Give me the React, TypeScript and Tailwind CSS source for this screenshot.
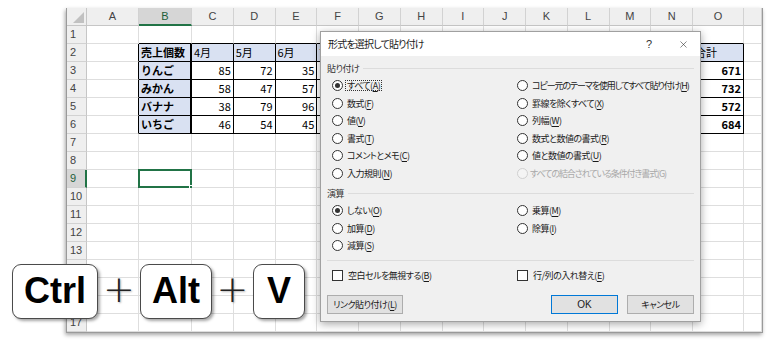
import { X } from 'lucide-react';

const COLS = ['A', 'B', 'C', 'D', 'E', 'F', 'G', 'H', 'I', 'J', 'K', 'L', 'M', 'N', 'O', ''];

const TABLE: (string | number)[][] = [
  ['売上個数', '4月', '5月', '6月', '7月', '8月', '9月', '10月', '11月', '12月', '1月', '2月', '3月', '合計'],
  ['りんご', 85, 72, 35, 61, 48, 55, 57, 52, 44, 50, 59, 53, 671],
  ['みかん', 58, 47, 57, 66, 62, 70, 64, 55, 68, 61, 60, 64, 732],
  ['バナナ', 38, 79, 96, 42, 35, 50, 41, 38, 44, 39, 36, 34, 572],
  ['いちご', 46, 54, 45, 60, 51, 58, 63, 59, 62, 57, 66, 63, 684],
];

const cellFont = "font-['Noto_Sans_CJK_JP',sans-serif]";
const uiFont = "font-['Noto_Sans_CJK_JP',sans-serif] [font-feature-settings:'palt']";

function Cell({ r, c }: { r: number; c: number }) {
  const inTable = r >= 2 && r <= 6 && c >= 1 && c <= 14;
  const rightBlack = inTable || (c === 0 && r >= 2 && r <= 6);
  const bottomBlack = inTable || (r === 1 && c >= 1 && c <= 14);
  const value = inTable ? TABLE[r - 2][c - 1] : '';
  const isNum = typeof value === 'number';
  const bold = inTable && (c === 1 || (c === 14 && r >= 3));
  const blue = inTable && (r === 2 || c === 1);
  const selected = r === 9 && c === 1;

  return (
    <div
      className={`relative h-[18px] whitespace-nowrap px-[2px] text-[11px] leading-[17px] text-black ${cellFont} ${
        rightBlack ? 'border-r-black' : 'border-r-[#dedede]'
      } ${c === 1 && inTable ? 'border-r-2' : 'border-r'} ${bottomBlack ? 'border-b-black' : 'border-b-[#dedede]'} border-b ${
        blue ? 'bg-[#d9e1f2]' : 'bg-white'
      } ${isNum ? 'text-right' : 'text-left'} ${bold ? 'font-bold' : 'font-normal'}`}
    >
      {value}
      {selected && (
        <div className="absolute -left-px -top-px right-[-1px] bottom-[-1px] border-2 border-[#217346]">
          <div className="absolute -bottom-[4px] -right-[4px] h-[5px] w-[5px] border border-white bg-[#217346]" />
        </div>
      )}
    </div>
  );
}

function Sheet() {
  const rows = Array.from({ length: 17 }, (_, i) => i + 1);
  return (
    <div className="ml-[66px] mt-[8px] w-[697px] border-b border-l border-r border-[#9a9a9a] bg-white shadow-[-1px_2px_4px_rgba(0,0,0,0.35)]">
      <div className="grid grid-cols-[20px_52px_53px_repeat(12,41.75px)_51px_1fr]">
        <div className="relative h-[18px] border-b border-r border-[#c6c6c6] bg-[#efefef]">
          <div className="absolute bottom-[2px] right-[2px] h-0 w-0 border-b-[11px] border-l-[11px] border-b-[#c1c1c1] border-l-transparent" />
        </div>
        {COLS.map((name, c) => (
          <div
            key={name + c}
            className={`h-[18px] border-r border-[#d2d2d2] text-center font-['Liberation_Sans',sans-serif] text-[11px] leading-[17px] ${
              c === 1
                ? 'border-b-2 border-b-[#217346] bg-[#d6d6d6] text-[#1e5e3a]'
                : 'border-b border-b-[#c6c6c6] bg-[#efefef] text-[#444]'
            }`}
          >
            {name}
          </div>
        ))}
        {rows.map((r) => (
          <div key={r} className="contents">
            <div
              className={`h-[18px] border-b pl-[3px] font-['Liberation_Sans',sans-serif] text-[11px] leading-[17px] ${
                r === 9
                  ? 'border-r-2 border-b-[#d2d2d2] border-r-[#217346] bg-[#d6d6d6] text-[#1e5e3a]'
                  : 'border-r border-b-[#d2d2d2] border-r-[#c6c6c6] bg-[#efefef] text-[#444]'
              }`}
            >
              {r}
            </div>
            {COLS.map((_, c) => (
              <Cell key={c} r={r} c={c} />
            ))}
          </div>
        ))}
      </div>
    </div>
  );
}

type Opt = { pre: string; k: string; post?: string; checked?: boolean; disabled?: boolean; focus?: boolean; tight?: boolean };

function Label({ o }: { o: Opt }) {
  const track = o.tight ? 'tracking-[-1.1px]' : 'tracking-[-0.5px]';
  if (o.disabled) return <span className={`whitespace-nowrap ${track}`}>{o.pre + o.k + (o.post ?? '')}</span>;
  return (
    <span
      className={`whitespace-nowrap px-[1px] ${track} ${
        o.focus ? 'border border-dotted border-[#333]' : 'border border-transparent'
      }`}
    >
      {o.pre}
      <span className="underline underline-offset-[2px]">{o.k}</span>
      {o.post ?? ')'}
    </span>
  );
}

function Radio({ o }: { o: Opt }) {
  return (
    <div className={`flex h-[17.5px] items-center gap-[2px] ${o.disabled ? 'text-[#a8a8a8]' : 'text-[#1a1a1a]'}`}>
      <div
        className={`flex h-[11px] w-[11px] shrink-0 items-center justify-center rounded-full border ${
          o.disabled ? 'border-[#d0d0d0] bg-[#f4f4f4]' : 'border-[#333] bg-white'
        }`}
      >
        {o.checked && <div className="h-[5px] w-[5px] rounded-full bg-[#333]" />}
      </div>
      <Label o={o} />
    </div>
  );
}

function Check({ o }: { o: Opt }) {
  return (
    <div className="flex h-[17.5px] items-center gap-[3px] text-[#1a1a1a]">
      <div className="h-[11px] w-[11px] shrink-0 border border-[#333] bg-white" />
      <Label o={o} />
    </div>
  );
}

function GroupHead({ text }: { text: string }) {
  return (
    <div className="flex h-[14px] items-center gap-[4px] text-[#333]">
      <span className="tracking-[-0.5px]">{text}</span>
      <div className="h-px flex-1 bg-[#dcdcdc]" />
    </div>
  );
}

const PASTE_L: Opt[] = [
  { pre: 'すべて(', k: 'A', checked: true, focus: true },
  { pre: '数式(', k: 'F' },
  { pre: '値(', k: 'V' },
  { pre: '書式(', k: 'T' },
  { pre: 'コメントとメモ(', k: 'C' },
  { pre: '入力規則(', k: 'N' },
];
const PASTE_R: Opt[] = [
  { pre: 'コピー元のテーマを使用してすべて貼り付け(', k: 'H', tight: true },
  { pre: '罫線を除くすべて(', k: 'X' },
  { pre: '列幅(', k: 'W' },
  { pre: '数式と数値の書式(', k: 'R' },
  { pre: '値と数値の書式(', k: 'U' },
  { pre: 'すべての結合されている条件付き書式(', k: 'G', post: ')', disabled: true, tight: true },
];
const OP_L: Opt[] = [
  { pre: 'しない(', k: 'O', checked: true },
  { pre: '加算(', k: 'D' },
  { pre: '減算(', k: 'S' },
];
const OP_R: Opt[] = [
  { pre: '乗算(', k: 'M' },
  { pre: '除算(', k: 'I' },
];

function PasteDialog() {
  return (
    <div className={`absolute left-[320px] top-[31px] flex h-[291px] w-[381px] flex-col border border-[#a0a0a0] bg-[#f0f0f0] text-[9px] leading-none shadow-[0_2px_8px_rgba(0,0,0,0.35)] ${uiFont}`}>
      <div className="flex h-[24px] items-center bg-white pl-[7px] text-[10px] text-[#1a1a1a]">
        <span className="flex-1 tracking-[-0.8px]">形式を選択して貼り付け</span>
        <span className="mr-[26px] font-['Liberation_Sans',sans-serif] text-[11px] text-[#333]">?</span>
        <X size={11} strokeWidth={1.2} className="mr-[11px] text-[#222]" />
      </div>
      <div className="flex flex-1 flex-col px-[6px] pt-[5px]">
        <GroupHead text="貼り付け" />
        <div className="mt-[2px] grid grid-cols-[185px_1fr] pl-[5px]">
          <div>{PASTE_L.map((o) => <Radio key={o.k} o={o} />)}</div>
          <div>{PASTE_R.map((o) => <Radio key={o.k} o={o} />)}</div>
        </div>
        <div className="mt-[4px]">
          <GroupHead text="演算" />
        </div>
        <div className="mt-[2px] grid grid-cols-[185px_1fr] pl-[5px]">
          <div>{OP_L.map((o) => <Radio key={o.k} o={o} />)}</div>
          <div>{OP_R.map((o) => <Radio key={o.k} o={o} />)}</div>
        </div>
        <div className="mt-[5px] h-px bg-[#dcdcdc]" />
        <div className="mt-[6px] grid grid-cols-[185px_1fr] pl-[5px]">
          <Check o={{ pre: '空白セルを無視する(', k: 'B' }} />
          <Check o={{ pre: '行/列の入れ替え(', k: 'E' }} />
        </div>
        <div className="mt-[11px] flex items-center justify-between">
          <button className="flex h-[19px] w-[76px] items-center justify-center whitespace-nowrap border border-[#adadad] bg-[#e1e1e1] tracking-[-0.5px] text-[#1a1a1a]">
            リンク貼り付け(<span className="underline underline-offset-[2px]">L</span>)
          </button>
          <div className="flex gap-[9px]">
            <button className="flex h-[19px] w-[67px] items-center justify-center border border-[#0078d7] bg-[#e1e1e1] font-['Liberation_Sans',sans-serif] text-[10px] text-[#1a1a1a]">
              OK
            </button>
            <button className="flex h-[19px] w-[67px] items-center justify-center whitespace-nowrap border border-[#adadad] bg-[#e1e1e1] tracking-[-0.5px] text-[#1a1a1a]">
              キャンセル
            </button>
          </div>
        </div>
      </div>
    </div>
  );
}

function Key({ label, w }: { label: string; w: string }) {
  return (
    <div
      className={`flex h-[55px] ${w} items-center justify-center rounded-[9px] border-[1.5px] border-[#4a4a4a] bg-white pb-[2px] font-['Liberation_Sans',sans-serif] text-[36px] font-bold text-black shadow-[2px_2px_3px_rgba(0,0,0,0.35)]`}
    >
      {label}
    </div>
  );
}

function Plus({ w }: { w: string }) {
  return (
    <div
      className={`flex ${w} items-center justify-center pb-[4px] font-['DejaVu_Sans',sans-serif] text-[38px] font-extralight text-[#222] [text-shadow:1px_1px_2px_rgba(0,0,0,0.3)]`}
    >
      +
    </div>
  );
}

export default function App() {
  return (
    <div className="relative h-[342px] w-[768px] overflow-hidden bg-white">
      <Sheet />
      <PasteDialog />
      <div className="absolute left-[12px] top-[261px] flex items-center">
        <Key label="Ctrl" w="w-[86px]" />
        <Plus w="w-[42px]" />
        <Key label="Alt" w="w-[72px]" />
        <Plus w="w-[41px]" />
        <Key label="V" w="w-[52px]" />
      </div>
    </div>
  );
}
